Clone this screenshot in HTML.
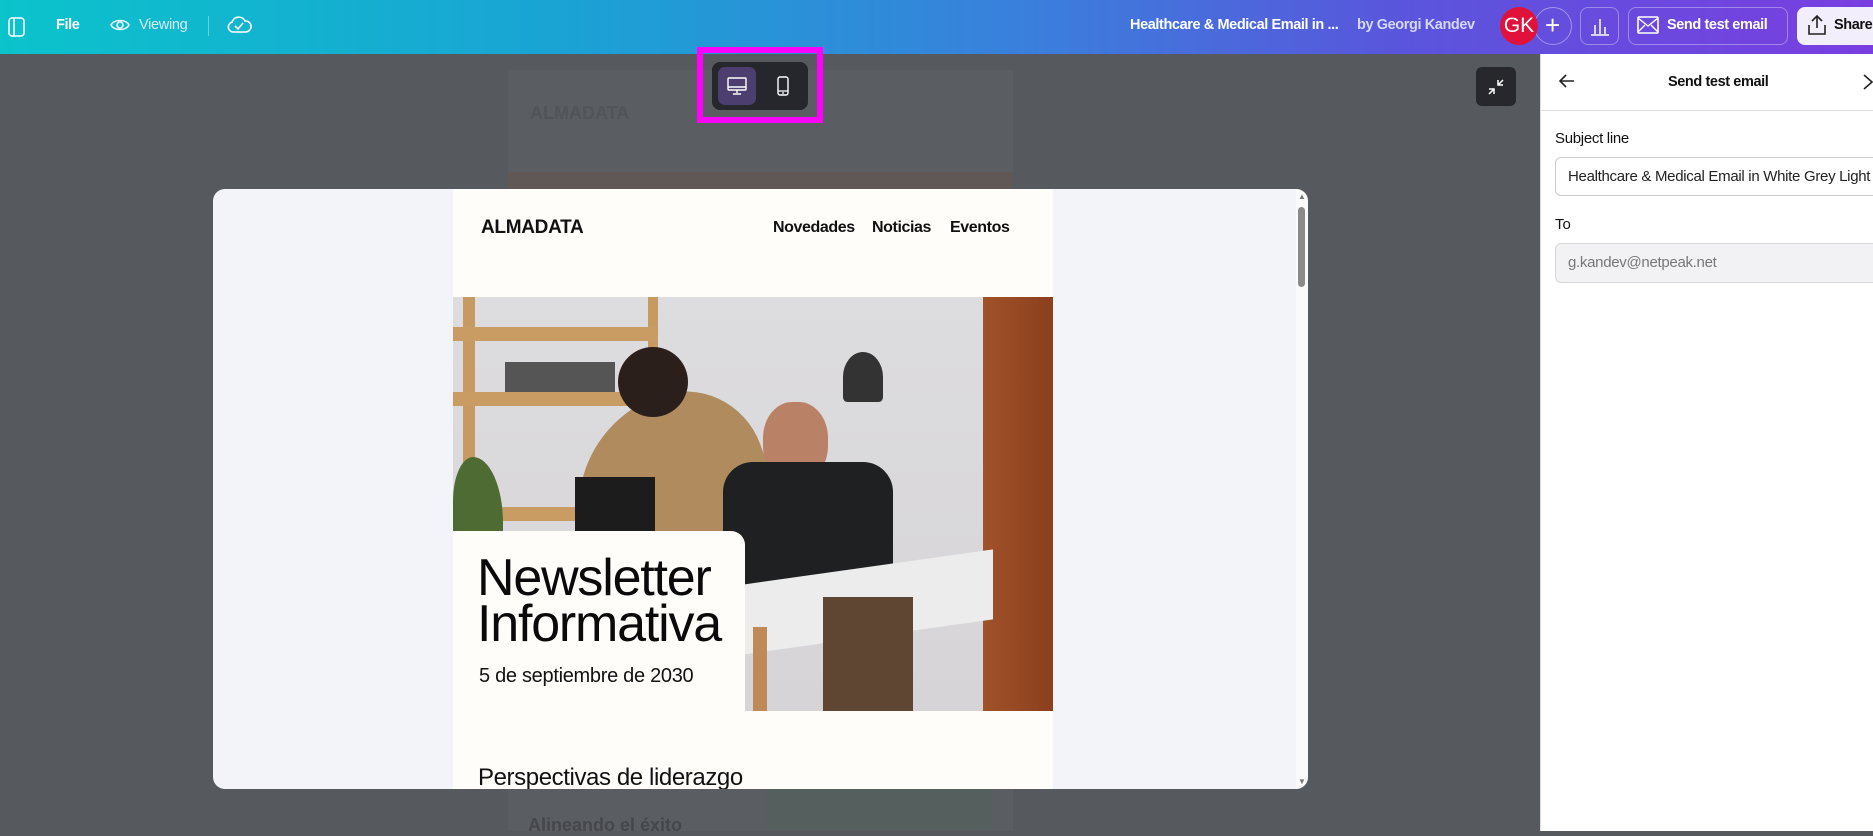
<!DOCTYPE html>
<html><head><meta charset="utf-8"><style>
*{margin:0;padding:0;box-sizing:border-box}
body{width:1873px;height:831px;overflow:hidden;background:#56595e;font-family:"Liberation Sans",sans-serif;position:relative}
.abs{position:absolute}
.top{left:0;top:0;width:1873px;height:54px;background:linear-gradient(90deg,#0bc3cb 0%,#1aa3d4 30%,#3a7fdc 55%,#5a55dc 75%,#7a3ee0 100%)}
.w{color:#fff}
.btn{border:1px solid rgba(255,255,255,.35);border-radius:8px;height:38px;top:7px}
.hd{font-size:14.5px;letter-spacing:-0.4px;font-weight:bold}
</style></head><body>
<div class="abs top"></div>
<svg class="abs" style="left:7px;top:16px" width="20" height="22" viewBox="0 0 20 22"><rect x="2" y="2" width="15" height="18" rx="3" fill="none" stroke="#fff" stroke-width="1.6"/><line x1="7" y1="2" x2="7" y2="20" stroke="#fff" stroke-width="1.6"/></svg>
<div class="abs w hd" style="left:56px;top:17px">File</div>
<svg class="abs" style="left:109px;top:15px" width="22" height="20" viewBox="0 0 22 20"><path d="M2 10C5 4 17 4 20 10C17 16 5 16 2 10Z" fill="none" stroke="#e8f6fb" stroke-width="1.6"/><circle cx="11" cy="10" r="3" fill="none" stroke="#e8f6fb" stroke-width="1.6"/></svg>
<div class="abs" style="left:139px;top:17px;font-size:14.5px;letter-spacing:-0.3px;color:#d8eef6">Viewing</div>
<div class="abs" style="left:208px;top:16px;width:1px;height:20px;background:rgba(255,255,255,.35)"></div>
<svg class="abs" style="left:226px;top:12px" width="26" height="26" viewBox="0 0 26 26"><path d="M7 20a5 5 0 0 1-1-9.8A7 7 0 0 1 19 9a5 5 0 0 1 1 11Z" fill="none" stroke="#fff" stroke-width="1.6"/><path d="M9 14l3 3 5-6" fill="none" stroke="#fff" stroke-width="1.6"/></svg>
<div class="abs w hd" style="left:1130px;top:17px;width:220px;white-space:nowrap;overflow:hidden">Healthcare &amp; Medical Email in ...</div>
<div class="abs hd" style="left:1357px;top:17px;color:#d6d8ff">by Georgi Kandev</div>
<div class="abs" style="left:1534px;top:7px;width:38px;height:38px;border-radius:50%;border:1px solid rgba(255,255,255,.4)"></div>
<div class="abs w" style="left:1545px;top:10px;font-size:26px">+</div>
<div class="abs" style="left:1500px;top:7px;width:38px;height:38px;border-radius:50%;background:#e0123b;color:#fff;font-size:21px;text-align:center;line-height:38px">GK</div>
<div class="abs btn" style="left:1580px;width:39px"></div>
<svg class="abs" style="left:1589px;top:15px" width="22" height="22" viewBox="0 0 22 22"><path d="M2 20H20M6 19V10M11 19V4M16 19V12" stroke="#fff" stroke-width="1.5" fill="none"/></svg>
<div class="abs btn" style="left:1628px;width:160px"></div>
<svg class="abs" style="left:1637px;top:16px" width="22" height="18" viewBox="0 0 22 18"><rect x="1" y="1" width="20" height="16" rx="1" fill="none" stroke="#fff" stroke-width="1.6"/><path d="M1 2l10 8 10-8M1 16l7-7M21 16l-7-7" fill="none" stroke="#fff" stroke-width="1.4"/></svg>
<div class="abs w hd" style="left:1667px;top:17px">Send test email</div>
<div class="abs" style="left:1797px;top:7px;width:90px;height:38px;border-radius:8px;background:#f3eefc"></div>
<svg class="abs" style="left:1806px;top:13px" width="22" height="24" viewBox="0 0 22 24"><path d="M11 15V3M6 8l5-5 5 5M3 12v9h16v-9" fill="none" stroke="#222" stroke-width="1.6"/></svg>
<div class="abs hd" style="left:1834px;top:17px;color:#111">Share</div>

<div class="abs" style="left:508px;top:70px;width:505px;height:761px;background:#5a5d61"></div>
<div class="abs" style="left:508px;top:172px;width:505px;height:30px;background:#5f5855"></div>
<div class="abs" style="left:530px;top:103px;font-size:18px;font-weight:bold;color:#515458">ALMADATA</div>
<div class="abs" style="left:767px;top:788px;width:225px;height:43px;background:#55605e"></div>
<div class="abs" style="left:528px;top:815px;font-size:18px;font-weight:bold;color:#45474b">Alineando el éxito</div>

<div class="abs" style="left:697px;top:47px;width:126px;height:76px;border:6px solid #ff00ff"></div>
<div class="abs" style="left:712px;top:62px;width:96px;height:48px;border-radius:8px;background:#25272c"></div>
<div class="abs" style="left:718px;top:67px;width:38px;height:38px;border-radius:7px;background:#4c3f70"></div>
<svg class="abs" style="left:726px;top:76px" width="22" height="20" viewBox="0 0 22 20"><rect x="2" y="2" width="18" height="12" rx="1" fill="none" stroke="#fff" stroke-width="1.4"/><path d="M2 11H20M11 14v3M7 18h8" stroke="#fff" stroke-width="1.4"/></svg>
<svg class="abs" style="left:775px;top:76px" width="16" height="20" viewBox="0 0 16 20"><rect x="3" y="1" width="10" height="18" rx="2" fill="none" stroke="#fff" stroke-width="1.4"/><path d="M3 15H13M7 17h2" stroke="#fff" stroke-width="1.2"/></svg>

<div class="abs" style="left:1476px;top:67px;width:40px;height:39px;border-radius:6px;background:#26282c"></div>
<svg class="abs" style="left:1485px;top:76px" width="22" height="22" viewBox="0 0 22 22"><path d="M13 4v5h5M13 9l5-5M9 18v-5H4M9 13l-5 5" fill="none" stroke="#fff" stroke-width="1.5"/></svg>

<div class="abs" style="left:213px;top:189px;width:1095px;height:600px;border-radius:12px;background:#f3f4f9;overflow:hidden">
 <div class="abs" style="left:240px;top:0;width:600px;height:600px;background:#fefdfa;overflow:hidden">
  <div class="abs" style="left:28px;top:28px;font-size:19px;font-weight:bold;color:#111;letter-spacing:-0.3px">ALMADATA</div>
  <div class="abs" style="left:320px;top:30px;font-size:16px;font-weight:bold;color:#111;letter-spacing:-0.4px">Novedades</div>
  <div class="abs" style="left:419px;top:30px;font-size:16px;font-weight:bold;color:#111;letter-spacing:-0.4px">Noticias</div>
  <div class="abs" style="left:497px;top:30px;font-size:16px;font-weight:bold;color:#111;letter-spacing:-0.4px">Eventos</div>
  <div class="abs" style="left:0;top:108px;width:600px;height:414px;background:linear-gradient(180deg,#dddcdf,#d6d4d6);overflow:hidden">
   <div class="abs" style="left:10px;top:0;width:12px;height:260px;background:#c79a62"></div>
   <div class="abs" style="left:195px;top:0;width:10px;height:260px;background:#c79a62"></div>
   <div class="abs" style="left:0;top:30px;width:205px;height:14px;background:#c99c64"></div>
   <div class="abs" style="left:0;top:95px;width:205px;height:14px;background:#c99c64"></div>
   <div class="abs" style="left:0;top:210px;width:205px;height:14px;background:#c99c64"></div>
   <div class="abs" style="left:52px;top:65px;width:110px;height:30px;background:#555;"></div>
   <div class="abs" style="left:0;top:160px;width:50px;height:110px;background:#4d6b33;border-radius:40% 60% 0 0"></div>
   <div class="abs" style="left:120px;top:100px;width:200px;height:200px;background:#b08b5e;border-radius:60% 40% 0 0;transform:rotate(-20deg)"></div>
   <div class="abs" style="left:165px;top:50px;width:70px;height:70px;border-radius:50%;background:#2a1f1a"></div>
   <div class="abs" style="left:122px;top:180px;width:80px;height:120px;background:#1c1c1c"></div>
   <div class="abs" style="left:310px;top:105px;width:65px;height:80px;border-radius:45%;background:#b98266"></div>
   <div class="abs" style="left:270px;top:165px;width:170px;height:150px;background:#1f2021;border-radius:30px 30px 0 0"></div>
   <div class="abs" style="left:390px;top:55px;width:40px;height:50px;background:#333;border-radius:50% 50% 10% 10%"></div>
   <div class="abs" style="left:530px;top:0;width:70px;height:414px;background:linear-gradient(90deg,#a0522a,#8a3f1c)"></div>
   <div class="abs" style="left:290px;top:270px;width:250px;height:70px;background:#ececec;transform:skewY(-8deg)"></div>
   <div class="abs" style="left:300px;top:330px;width:14px;height:90px;background:#c08a58"></div>
   <div class="abs" style="left:370px;top:300px;width:90px;height:120px;background:#5e4632"></div>
  </div>
  <div class="abs" style="left:0;top:342px;width:292px;height:200px;background:#fefdfa;border-radius:0 14px 0 0"></div>
  <div class="abs" style="left:24px;top:366px;font-size:52px;line-height:46px;color:#0a0a0a;letter-spacing:-1.2px">Newsletter<br>Informativa</div>
  <div class="abs" style="left:26px;top:476px;font-size:20px;color:#111;letter-spacing:-0.3px">5 de septiembre de 2030</div>
  <div class="abs" style="left:25px;top:575px;font-size:24px;color:#111;letter-spacing:-0.4px">Perspectivas de liderazgo</div>
 </div>
 <div class="abs" style="left:1083px;top:0;width:12px;height:600px;background:#fafafa"></div>
 <div class="abs" style="left:1085px;top:18px;width:7px;height:80px;border-radius:4px;background:#8a8a8a"></div>
 <div class="abs" style="left:1085px;top:3px;font-size:8px;color:#777">▲</div>
 <div class="abs" style="left:1085px;top:588px;font-size:8px;color:#777">▼</div>
</div>

<div class="abs" style="left:1540px;top:54px;width:333px;height:777px;background:#fff;border-left:1px solid #ddd"></div>
<svg class="abs" style="left:1557px;top:71px" width="20" height="20" viewBox="0 0 20 20"><path d="M17 10H3M9 4l-6 6 6 6" fill="none" stroke="#222" stroke-width="1.6"/></svg>
<div class="abs hd" style="left:1668px;top:74px;color:#111">Send test email</div>
<svg class="abs" style="left:1862px;top:72px" width="12" height="18" viewBox="0 0 12 18"><path d="M2 3l8 7-8 7" fill="none" stroke="#222" stroke-width="1.6"/></svg>
<div class="abs" style="left:1540px;top:110px;width:333px;height:1px;background:#ddd"></div>
<div class="abs" style="left:1555px;top:130px;font-size:15px;color:#111;letter-spacing:-0.3px">Subject line</div>
<div class="abs" style="left:1555px;top:157px;width:330px;height:39px;border:1px solid #ccc;border-radius:6px;background:#fff"></div>
<div class="abs" style="left:1568px;top:168px;font-size:15px;color:#222;white-space:nowrap;width:305px;overflow:hidden;letter-spacing:-0.3px">Healthcare &amp; Medical Email in White Grey Light</div>
<div class="abs" style="left:1555px;top:216px;font-size:15px;color:#111">To</div>
<div class="abs" style="left:1555px;top:243px;width:330px;height:40px;border:1px solid #d6d6d6;border-radius:6px;background:#f2f2f4"></div>
<div class="abs" style="left:1568px;top:254px;font-size:15px;color:#777;letter-spacing:-0.3px">g.kandev@netpeak.net</div>
</body></html>
